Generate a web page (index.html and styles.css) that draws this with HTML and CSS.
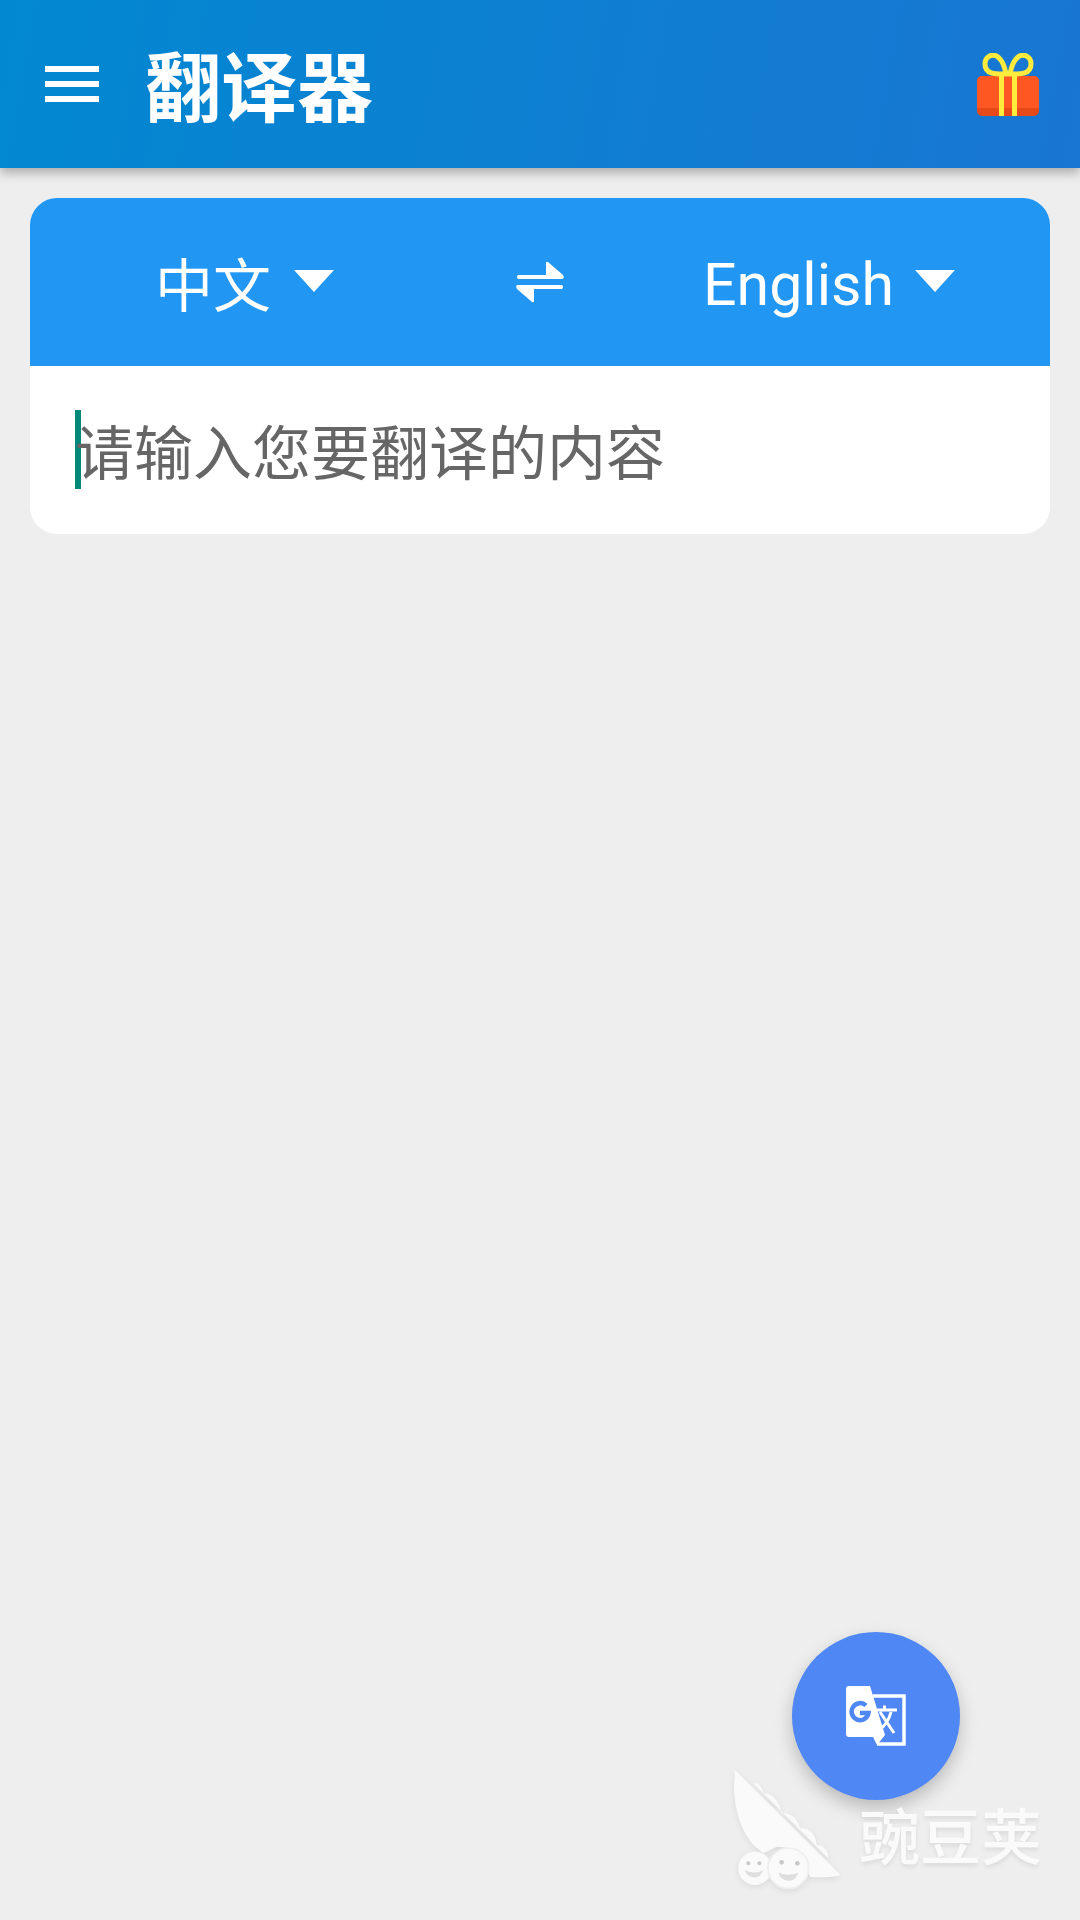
FILE: index.html
```html
<!DOCTYPE html>
<html lang="zh-CN">
<head>
<meta charset="utf-8">
<title>翻译器</title>
<link rel="stylesheet" href="styles.css">
</head>
<body>
<div class="app">
  <header class="appbar">
    <svg class="menu" viewBox="0 0 54 36" aria-label="菜单"><path d="M0 0h54v6H0zM0 15h54v6H0zM0 30h54v6H0z" fill="#fff"/></svg>
    <h1 class="title">翻译器</h1>
    <svg class="gift" viewBox="0 0 62 63" aria-label="礼物">
      <rect x="0" y="23" width="62" height="40" rx="5" fill="#e64a19"/>
      <path d="M0 28a5 5 0 0 1 5-5h52a5 5 0 0 1 5 5v27H0z" fill="#ff5722"/>
      <path d="M24.500 23v40M37.500 23v40" stroke="#ffeb3b" stroke-width="5" fill="none"/>
      <path d="M29 21C20 21 8 22 8 11C8 3 16 0 21 4C26 8 28 15 29 21ZM33 21C42 21 54 22 54 11C54 3 46 0 41 4C36 8 34 15 33 21Z" stroke="#ffeb3b" stroke-width="5" fill="none"/>
    </svg>
  </header>
  <main class="content">
    <section class="card">
      <div class="langbar">
        <div class="lang"><span>中文</span><i class="caret"></i></div>
        <svg class="swap" viewBox="0 0 48 42" aria-label="交换"><path d="M2 14H30V2q0-2 2-1L47 14q2 4-1 4H2q-2-2 0-4zM46 28H18V40q0 2-2 1L1 28q-2-4 1-4H46q2 2 0 4z" fill="#fff"/></svg>
        <div class="lang"><span class="en">English</span><i class="caret"></i></div>
      </div>
      <div class="inputrow">
        <span class="cursor"></span>
        <span class="placeholder">请输入您要翻译的内容</span>
      </div>
    </section>
  </main>
  <button class="fab" aria-label="翻译">
    <svg viewBox="0 0 60 60" class="fab-icon">
      <path d="M27 10H58V58H31" fill="none" stroke="#fff" stroke-width="3.500"/>
      <path d="M31 24H51M38.500 19.500V24M34 26L48 47M45 26Q42 38 33 44" fill="none" stroke="#fff" stroke-width="3"/>
      <path d="M3 0H24L39 49L31 59L27 51H3A3 3 0 0 1 0 48V3A3 3 0 0 1 3 0Z" fill="#fff"/>
      <path d="M20 19.500A8.500 8.500 0 1 0 22.500 27H14" fill="none" stroke="#4f87f5" stroke-width="4.500"/>
    </svg>
  </button>
  <div class="watermark">
    <svg class="pod" viewBox="30 15 360 375">
      <path d="M100 70Q122 65 130 100Q170 100 185 160Q225 155 240 205Q285 205 290 255Q325 260 325 295Z" fill="#fafafa"/>
      <path d="M45 30L362 345Q330 355 270 350L255 310Q230 260 170 260L130 280L100 255Q45 190 42 80Z" fill="#fafafa"/>
      <circle cx="105" cy="325" r="50" fill="#fafafa"/>
      <circle cx="205" cy="325" r="61" fill="#fafafa" stroke="#eee" stroke-width="5"/>
      <circle cx="85" cy="310" r="6" fill="#c8c8c8"/><circle cx="118" cy="310" r="6" fill="#c8c8c8"/>
      <circle cx="185" cy="307" r="7" fill="#c8c8c8"/><circle cx="232" cy="310" r="7" fill="#c8c8c8"/>
      <path d="M75 330Q105 345 130 330Q120 355 100 352Q80 350 75 330ZM175 338Q205 350 235 338Q225 365 203 362Q182 360 175 338Z" fill="#dedede"/>
    </svg>
    <span class="wm-text">豌豆荚</span>
  </div>
</div>
</body>
</html>
```
FILE: styles.css
```css
* { box-sizing: border-box; }
html, body { margin: 0; padding: 0; }
body { width: 1080px; height: 1920px; background: #eeeeee; overflow: hidden; font-family: Roboto, "Noto Sans CJK SC", sans-serif; }
.app { position: relative; width: 1080px; height: 1920px; }
.appbar {
  height: 168px; display: flex; align-items: center; padding: 0 41px 0 45px;
  background: linear-gradient(100deg, #0288d1, #1976d2);
  box-shadow: 0 5px 10px rgba(0,0,0,.28);
}
.menu { width: 54px; height: 36px; flex: none; }
.title { margin: -3px 0 0 46px; flex: 1; color: #fff; font: 700 76px/1 "Noto Sans CJK SC", sans-serif; }
.gift { width: 62px; height: 63px; flex: none; }
.content { padding: 30px; }
.card { border-radius: 27px; overflow: hidden; background: #fff; }
.langbar { height: 168px; background: #2196f3; display: grid; grid-template-columns: 429px 162px 1fr; align-items: center; justify-items: center; padding-right: 13px; }
.lang { display: flex; align-items: center; gap: 23px; color: #fff; font-size: 59px; line-height: 1; }
.lang span { font-family: "Noto Sans CJK SC", sans-serif; font-weight: 400; font-size: 58px; }
.lang .en { font-family: Roboto, sans-serif; font-weight: 400; font-size: 59px; position: relative; top: 2px; margin-right: -2px; }
.caret { width: 0; height: 0; border-left: 20px solid transparent; border-right: 20px solid transparent; border-top: 22px solid #fff; margin-top: -2px; }
.swap { width: 48px; height: 42px; }
.inputrow { height: 168px; display: flex; align-items: center; padding-left: 45px; }
.cursor { width: 6px; height: 79px; background: #00897b; flex: none; margin: -2px -6px 0 0; }
.placeholder { color: #666; font: 400 59px/1 "Noto Sans CJK SC", sans-serif; white-space: nowrap; margin-top: -2px; }
.fab { position: absolute; left: 792px; top: 1632px; width: 168px; height: 168px; border: 0; padding: 0; border-radius: 50%; background: #4f87f5; box-shadow: 0 8px 18px rgba(0,0,0,.22); display: flex; align-items: center; justify-content: center; }
.fab-icon { width: 60px; height: 60px; }
.watermark { position: absolute; left: 730px; top: 1765px; display: flex; align-items: flex-start; }
.pod { width: 120px; height: 125px; filter: drop-shadow(0 2px 3px rgba(0,0,0,.08)); }
.wm-text { margin: 38px 0 0 9px; color: #fafafa; font: 500 61px/1 "Noto Sans CJK SC", sans-serif; text-shadow: 0 3px 4px rgba(0,0,0,.08); white-space: nowrap; }
```
